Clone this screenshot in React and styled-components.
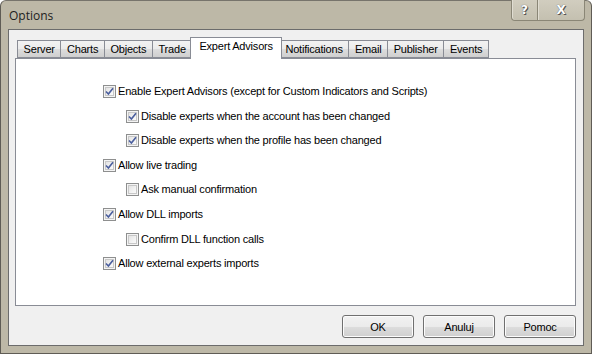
import React from "react";
import styled, { createGlobalStyle } from "styled-components";

const GlobalStyle = createGlobalStyle`
  html, body {
    margin: 0;
    padding: 0;
    background: #ffffff;
  }
  body {
    font-family: "Liberation Sans", Arial, sans-serif;
    font-size: 11px;
    letter-spacing: -0.2px;
    color: #000;
  }
`;

const tabs = [
  "Server",
  "Charts",
  "Objects",
  "Trade",
  "Expert Advisors",
  "Notifications",
  "Email",
  "Publisher",
  "Events"
];

const options = [
  { label: "Enable Expert Advisors (except for Custom Indicators and Scripts)", checked: true, level: 0 },
  { label: "Disable experts when the account has been changed", checked: true, level: 1 },
  { label: "Disable experts when the profile has been changed", checked: true, level: 1 },
  { label: "Allow live trading", checked: true, level: 0 },
  { label: "Ask manual confirmation", checked: false, level: 1 },
  { label: "Allow DLL imports", checked: true, level: 0 },
  { label: "Confirm DLL function calls", checked: false, level: 1 },
  { label: "Allow external experts imports", checked: true, level: 0 }
];

// okno w stylu Windows 7 Basic
const Window = styled.div`
  width: 592px;
  height: 354px;
  box-sizing: border-box;
  background: #bdb8a7;
  border: 1px solid #5f5c55;
  border-top-color: #77746c;
  border-radius: 6px 6px 0 0;
  display: flex;
  flex-direction: column;
  position: relative;
`;

const TitleBar = styled.div`
  height: 28px;
  display: flex;
  align-items: center;
  padding: 1px 0 0 8px;
  box-sizing: border-box;
  font-family: "Open Sans", "Liberation Sans", sans-serif;
  font-size: 12px;
  letter-spacing: 0;
  color: #1e1e1e;
`;

const CaptionButtons = styled.div`
  position: absolute;
  top: -1px;
  right: 6px;
  display: flex;
`;

const CaptionButton = styled.div`
  width: ${(p) => p.$w}px;
  height: 21px;
  box-sizing: border-box;
  border: 1px solid #8a8676;
  border-top: none;
  border-left-width: ${(p) => (p.$first ? 1 : 0)}px;
  border-radius: ${(p) => (p.$first ? "0 0 0 4px" : "0 0 4px 0")};
  background: linear-gradient(#d1cdbf, #c4c0b0);
  box-shadow: inset 1px 0 0 #e0ddd2;
  display: flex;
  align-items: center;
  justify-content: center;
  font-family: "DejaVu Sans", sans-serif;
  font-weight: bold;
  font-size: 12px;
  color: #fff;
  text-shadow: 0 0 1px #444, 1px 1px 0 #555;
`;

const Client = styled.div`
  flex: 1;
  margin: 0 7px 7px 7px;
  background: #f0f0f0;
  border: 1px solid #6c6c6c;
  display: flex;
  flex-direction: column;
  padding: 7px 7px 0 6px;
`;

const TabStrip = styled.div`
  display: flex;
  align-items: flex-end;
  height: 21px;
  padding-left: 2px;
  position: relative;
  z-index: 1;
`;

const Tab = styled.div`
  height: ${(p) => (p.$active ? 22 : 18)}px;
  box-sizing: border-box;
  padding: ${(p) => (p.$active ? "2px 8px 0" : "0 5.6px")};
  margin: 0 ${(p) => (p.$active ? -2 : 0)}px ${(p) => (p.$active ? -1 : 0)}px;
  border: 1px solid #898c95;
  border-bottom: ${(p) => (p.$active ? "none" : "1px solid #898c95")};
  border-left-width: ${(p) => (p.$active || p.$first ? 1 : 0)}px;
  background: ${(p) =>
    p.$active ? "#ffffff" : "linear-gradient(#f2f2f2 0%, #ebebeb 50%, #dddddd 51%, #cfcfcf 100%)"};
  display: flex;
  align-items: ${(p) => (p.$active ? "flex-start" : "center")};
  position: relative;
  z-index: ${(p) => (p.$active ? 2 : 1)};
  white-space: nowrap;
`;

const Panel = styled.div`
  height: 248px;
  box-sizing: border-box;
  background: #ffffff;
  border: 1px solid #898c95;
  padding: 26px 0 0 87px;
  display: flex;
  flex-direction: column;
  gap: 11.6px;
`;

const OptionRow = styled.label`
  display: flex;
  align-items: center;
  height: 13px;
  padding-left: ${(p) => p.$level * 23}px;
`;

const Box = styled.span`
  width: 13px;
  height: 13px;
  box-sizing: border-box;
  border: 1px solid #8e8f8f;
  background: linear-gradient(135deg, #dcdcdc 0%, #f4f4f4 60%, #ffffff 100%);
  box-shadow: inset 0 0 0 1px #f4f4f4, inset 0 0 0 2px #c8c8c8;
  display: flex;
  align-items: center;
  justify-content: center;
  margin-right: 2px;
  flex: none;
`;

const Label = styled.span`
  line-height: 13px;
  white-space: nowrap;
`;

const Footer = styled.div`
  display: flex;
  justify-content: flex-end;
  gap: 9px;
  padding-top: 9px;
`;

const Button = styled.button`
  width: 72px;
  height: 23px;
  box-sizing: border-box;
  border: 1px solid #707070;
  border-radius: 3px;
  background: linear-gradient(#f2f2f2 0%, #ebebeb 50%, #dddddd 51%, #cfcfcf 100%);
  box-shadow: inset 0 0 0 1px #fcfcfc;
  font-family: "Liberation Sans", Arial, sans-serif;
  font-size: 11px;
  letter-spacing: -0.2px;
  color: #000;
  padding: 0;
`;

function CheckBox({ checked }) {
  return (
    <Box>
      {checked && (
        <svg width="9" height="9" viewBox="0 0 9 9">
          <path
            d="M1 4.5 L3.4 7 L8 1.2"
            fill="none"
            stroke="#4a5e9e"
            strokeWidth="1.6"
          />
        </svg>
      )}
    </Box>
  );
}

export default function App() {
  return (
    <>
      <GlobalStyle />
      <Window>
        <TitleBar>Options</TitleBar>
        <CaptionButtons>
          <CaptionButton $w={27} $first>?</CaptionButton>
          <CaptionButton $w={47}>X</CaptionButton>
        </CaptionButtons>
        <Client>
          <TabStrip>
            {tabs.map((t, i) => (
              <Tab key={t} $active={t === "Expert Advisors"} $first={i === 0}>
                {t}
              </Tab>
            ))}
          </TabStrip>
          <Panel>
            {options.map((o) => (
              <OptionRow key={o.label} $level={o.level}>
                <CheckBox checked={o.checked} />
                <Label>{o.label}</Label>
              </OptionRow>
            ))}
          </Panel>
          <Footer>
            <Button>OK</Button>
            <Button>Anuluj</Button>
            <Button>Pomoc</Button>
          </Footer>
        </Client>
      </Window>
    </>
  );
}
